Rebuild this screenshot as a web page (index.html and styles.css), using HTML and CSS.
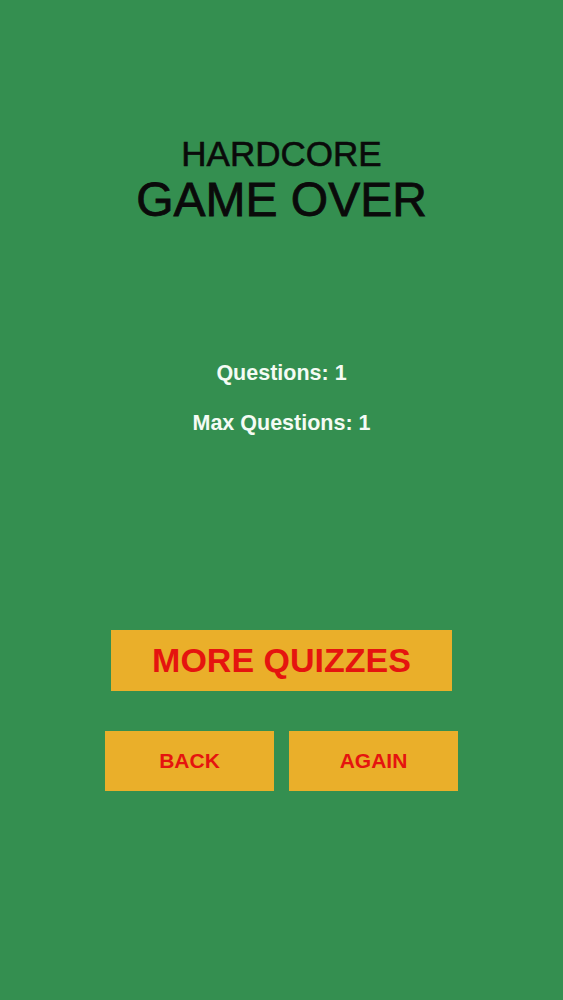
FILE: index.html
```html
<!DOCTYPE html>
<html lang="en">

<head>
  <meta charset="UTF-8">
  <meta name="viewport" content="width=device-width, initial-scale=1.0">
  <title>Hardcore - Game Over</title>
  <link rel="stylesheet" href="styles.css">
</head>

<body>
  <div class="screen">
    <div class="title-block">
      <div class="mode-title">HARDCORE</div>
      <div class="game-over">GAME OVER</div>
    </div>

    <div class="stats">
      <div class="stat-line">Questions: 1</div>
      <div class="stat-line">Max Questions: 1</div>
    </div>

    <div class="actions">
      <button class="quiz-button big-button">MORE QUIZZES</button>
      <div class="button-row">
        <button class="quiz-button small-button">BACK</button>
        <button class="quiz-button small-button">AGAIN</button>
      </div>
    </div>
  </div>
</body>

</html>
```

FILE: styles.css
```css
body {
  background: #348f50;
  font-family: 'Liberation Sans', Arial, sans-serif;
  margin: 0;
  min-height: 100vh;
}

.screen {
  display: flex;
  flex-direction: column;
  align-items: center;
  padding-top: 134px;
}

.title-block {
  text-align: center;
  color: #0a0a0a;
  -webkit-text-stroke: 0.6px #0a0a0a;
}

.mode-title {
  font-size: 35px;
  line-height: 40px;
}

.game-over {
  font-size: 48px;
  line-height: 52px;
  -webkit-text-stroke: 0.8px #0a0a0a;
}

.stats {
  margin-top: 122px;
  text-align: center;
  color: #f4fbf4;
}

.stat-line {
  font-size: 21.5px;
  font-weight: bold;
  line-height: 50px;
}

.actions {
  margin-top: 182px;
  display: flex;
  flex-direction: column;
  align-items: center;
  gap: 40px;
}

.quiz-button {
  background: #eaaf2a;
  border: none;
  color: #e5140f;
  font-family: 'Liberation Sans', Arial, sans-serif;
  font-weight: bold;
  padding: 0;
  cursor: pointer;
}

.big-button {
  width: 341px;
  height: 61px;
  font-size: 34px;
}

.button-row {
  display: flex;
  gap: 15px;
}

.small-button {
  width: 169px;
  height: 60px;
  font-size: 21px;
}
```
